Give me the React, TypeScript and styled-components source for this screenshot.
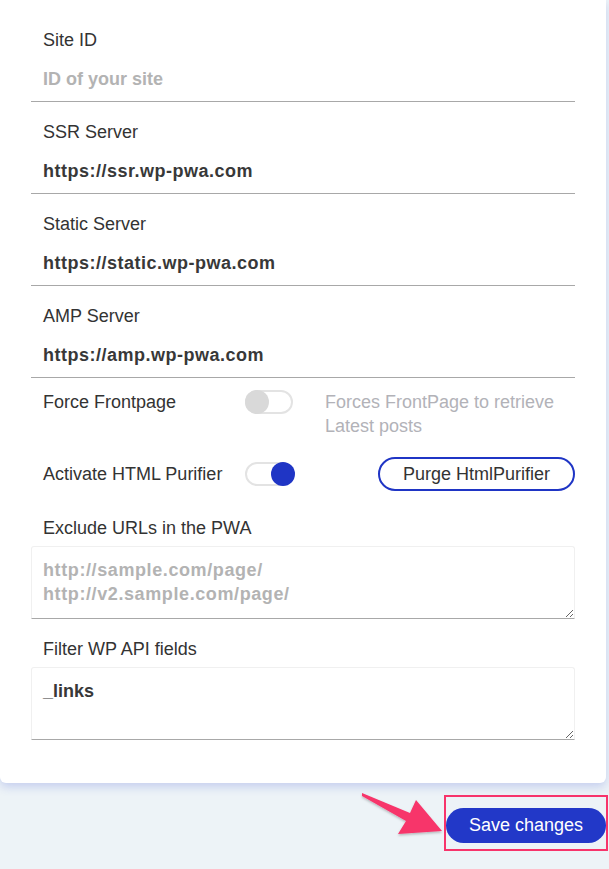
import React from "react";
import styled, { createGlobalStyle } from "styled-components";

const GlobalStyle = createGlobalStyle`
  html, body {
    margin: 0;
    padding: 0;
    background: #edf3f7;
    font-family: "Liberation Sans", Arial, sans-serif;
  }
  * { box-sizing: border-box; }
`;

const Page = styled.div`
  min-height: 869px;
  padding-right: 3px;
  display: flex;
  flex-direction: column;
`;

const Card = styled.div`
  background: #ffffff;
  border-radius: 0 0 6px 6px;
  box-shadow: 0 4px 10px rgba(60, 80, 210, 0.22);
  padding: 28px 31px 43px 31px;
  display: flex;
  flex-direction: column;
`;

const Field = styled.div<{ $top?: number }>`
  display: flex;
  flex-direction: column;
  margin-top: ${(p) => p.$top ?? 0}px;
`;

const Label = styled.div`
  padding-left: 12px;
  height: 24px;
  line-height: 24px;
  font-size: 18px;
  color: #333;
`;

const TextInput = styled.input`
  margin-top: 6px;
  height: 44px;
  border: none;
  border-bottom: 1px solid #a8a8a8;
  padding: 0 12px;
  font-family: "Liberation Sans", Arial, sans-serif;
  font-size: 18px;
  font-weight: 700;
  letter-spacing: 0.5px;
  color: #383838;
  outline: none;
  background: transparent;
  &::placeholder {
    color: #b3b3b3;
    letter-spacing: 0;
  }
`;

const TextArea = styled.textarea`
  margin-top: 6px;
  height: 73px;
  border: 1px solid #f0f0f0;
  border-bottom: 1px solid #a8a8a8;
  border-radius: 3px 3px 0 0;
  padding: 11px 11px;
  line-height: 24px;
  font-family: "Liberation Sans", Arial, sans-serif;
  font-size: 18px;
  font-weight: 700;
  color: #383838;
  outline: none;
  background: #fff;
  &::placeholder {
    color: #b3b3b3;
    letter-spacing: 0.6px;
  }
`;

const OptionRow = styled.div<{ $top: number }>`
  display: grid;
  grid-template-columns: 202px 80px 1fr;
  align-items: center;
  padding-left: 12px;
  margin-top: ${(p) => p.$top}px;
`;

const RowLabel = styled.div<{ $center?: boolean }>`
  font-size: 18px;
  line-height: 24px;
  color: #333;
  align-self: ${(p) => (p.$center ? "center" : "start")};
`;

const Track = styled.div<{ $on: boolean }>`
  position: relative;
  width: 48px;
  height: 24px;
  border: 2px solid #e3e3e3;
  border-radius: 12px;
  background: #fff;
  align-self: ${(p) => (p.$on ? "center" : "start")};
`;

const Knob = styled.div<{ $on: boolean }>`
  position: absolute;
  top: -2px;
  left: ${(p) => (p.$on ? "24px" : "-2px")};
  width: 24px;
  height: 24px;
  border-radius: 50%;
  background: ${(p) => (p.$on ? "#1f35c5" : "#d9d9d9")};
`;

const Desc = styled.div`
  font-size: 18px;
  line-height: 24px;
  color: #b2b2b8;
`;

const OutlineButton = styled.button`
  justify-self: end;
  height: 34px;
  padding: 0 23px;
  border: 2px solid #1f35c5;
  border-radius: 17px;
  background: #fff;
  font-family: "Liberation Sans", Arial, sans-serif;
  font-size: 18px;
  color: #333;
`;

const Footer = styled.div`
  display: flex;
  justify-content: flex-end;
  margin-top: 25px;
`;

const HighlightWrap = styled.div`
  position: relative;
`;

const SaveButton = styled.button`
  height: 35px;
  width: 160px;
  border: none;
  border-radius: 18px;
  background: #2238c8;
  color: #fff;
  font-family: "Liberation Sans", Arial, sans-serif;
  font-size: 18px;
  padding-top: 1px;
`;

const Highlight = styled.div`
  position: absolute;
  left: -2px;
  right: -2px;
  top: -13px;
  bottom: -8px;
  border: 2px solid #f7346b;
  pointer-events: none;
`;

const Arrow = styled.svg`
  position: absolute;
  left: -86px;
  top: -17px;
  overflow: visible;
`;

function Toggle({ on }: { on: boolean }) {
  return (
    <Track $on={on}>
      <Knob $on={on} />
    </Track>
  );
}

export default function App() {
  return (
    <>
      <GlobalStyle />
      <Page>
        <Card>
          <Field>
            <Label>Site ID</Label>
            <TextInput placeholder="ID of your site" readOnly />
          </Field>
          <Field $top={18}>
            <Label>SSR Server</Label>
            <TextInput defaultValue="https://ssr.wp-pwa.com" readOnly />
          </Field>
          <Field $top={18}>
            <Label>Static Server</Label>
            <TextInput defaultValue="https://static.wp-pwa.com" readOnly />
          </Field>
          <Field $top={18}>
            <Label>AMP Server</Label>
            <TextInput defaultValue="https://amp.wp-pwa.com" readOnly />
          </Field>

          <OptionRow $top={12}>
            <RowLabel>Force Frontpage</RowLabel>
            <Toggle on={false} />
            <Desc>
              Forces FrontPage to retrieve
              <br />
              Latest posts
            </Desc>
          </OptionRow>
          <OptionRow $top={19}>
            <RowLabel $center>Activate HTML Purifier</RowLabel>
            <Toggle on={true} />
            <OutlineButton>Purge HtmlPurifier</OutlineButton>
          </OptionRow>

          <Field $top={25}>
            <Label>Exclude URLs in the PWA</Label>
            <TextArea
              readOnly
              placeholder={"http://sample.com/page/\nhttp://v2.sample.com/page/"}
            />
          </Field>
          <Field $top={18}>
            <Label>Filter WP API fields</Label>
            <TextArea readOnly defaultValue="_links" />
          </Field>
        </Card>
        <Footer>
          <HighlightWrap>
            <SaveButton>Save changes</SaveButton>
            <Highlight />
            <Arrow width="90" height="50" viewBox="0 0 90 50">
              <defs>
                <filter id="ash" x="-20%" y="-20%" width="140%" height="160%">
                  <feDropShadow dx="0" dy="1.5" stdDeviation="1" floodColor="#000" floodOpacity="0.25" />
                </filter>
              </defs>
              <polygon
                points="2,2 50,22 56,9 82,40 38,43 46,30 2,5"
                fill="#f7346b"
                filter="url(#ash)"
              />
            </Arrow>
          </HighlightWrap>
        </Footer>
      </Page>
    </>
  );
}
